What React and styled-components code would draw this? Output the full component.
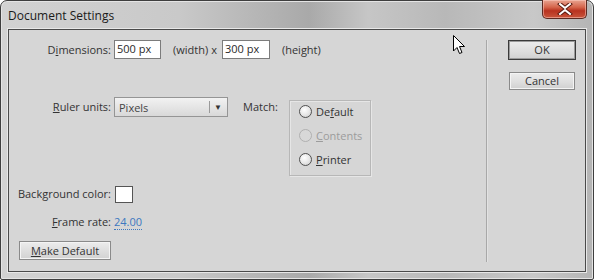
import styled, { createGlobalStyle } from "styled-components"

const GlobalStyle = createGlobalStyle`
    html, body {
        margin: 0;
        padding: 0;
        background: #ffffff;
    }
    body {
        font-family: "Open Sans", "Noto Sans", sans-serif;
    }
`

export default function App() {
    return (
        <>
            <GlobalStyle />
            <Janela>
                <BarraTitulo>
                    <Titulo>Document Settings</Titulo>
                    <BotaoFechar>
                        <svg width="16" height="12" viewBox="0 0 16 12">
                            <path d="M3 1 L8 5 L13 1 M3 11 L8 7 L13 11" stroke="#5a1a10" strokeWidth="4" fill="none" strokeLinecap="square" />
                            <path d="M3 1 L8 5 L13 1 M3 11 L8 7 L13 11" stroke="#ffffff" strokeWidth="2" fill="none" strokeLinecap="square" />
                        </svg>
                    </BotaoFechar>
                </BarraTitulo>
                <Cliente>
                    <Esquerda>
                        <Linha>
                            <Rotulo>D<u>i</u>mensions:</Rotulo>
                            <CampoTexto $largura={47}>500 px</CampoTexto>
                            <Texto $margem={12}>(width)</Texto>
                            <Texto $margem={3}>x</Texto>
                            <CampoTexto $largura={48} $margem={5}>300 px</CampoTexto>
                            <Texto $margem={12}>(height)</Texto>
                        </Linha>
                        <Linha $topo={38} $alinhar="flex-start">
                            <Rotulo $topo={1}><u>R</u>uler units:</Rotulo>
                            <Selecao>
                                <span>Pixels</span>
                                <SetaSelecao>▼</SetaSelecao>
                            </Selecao>
                            <Texto $margem={15} $topo={1} $largura={46}>Match:</Texto>
                            <Grupo>
                                <Opcao>
                                    <Radio />
                                    <span>De<u>f</u>ault</span>
                                </Opcao>
                                <Opcao $desativado>
                                    <Radio $desativado />
                                    <span><u>C</u>ontents</span>
                                </Opcao>
                                <Opcao>
                                    <Radio />
                                    <span><u>P</u>rinter</span>
                                </Opcao>
                            </Grupo>
                        </Linha>
                        <Linha $topo={9}>
                            <Rotulo>Background color:</Rotulo>
                            <Amostra />
                        </Linha>
                        <Linha $topo={10}>
                            <Rotulo><u>F</u>rame rate:</Rotulo>
                            <Valor>24.00</Valor>
                        </Linha>
                        <BotaoPadrao><u>M</u>ake Default</BotaoPadrao>
                    </Esquerda>
                    <Separador />
                    <Direita>
                        <Botao $principal>OK</Botao>
                        <Botao>Cancel</Botao>
                    </Direita>
                    <Cursor>
                        <svg width="13" height="20" viewBox="0 0 13 20">
                            <path d="M0.5 0.5 L0.5 16 L4 12.5 L6.5 18.5 L9 17.5 L6.5 11.5 L11.5 11.5 Z" fill="#ffffff" stroke="#000000" strokeWidth="1" strokeLinejoin="miter" />
                        </svg>
                    </Cursor>
                </Cliente>
            </Janela>
        </>
    )
}

const Janela = styled.div`
    width: 594px;
    height: 280px;
    box-sizing: border-box;
    border: 1px solid #3e3e3e;
    border-radius: 7px 7px 2px 2px;
    background: linear-gradient(90deg, #d2d2d2 0%, #c9c9c9 30%, #a9a9a9 52%, #c6c6c6 62%, #b8b8b8 75%, #c8c8c8 90%, #b4b4b4 100%);
    display: flex;
    flex-direction: column;
    box-shadow: inset 0 0 0 1px #e4e4e4;
`

const BarraTitulo = styled.div`
    height: 28px;
    display: flex;
    align-items: flex-start;
    justify-content: space-between;
    padding: 0 6px 0 7px;
`

const Titulo = styled.div`
    font-size: 12px;
    color: #1a1a1a;
    line-height: 30px;
`

const BotaoFechar = styled.div`
    width: 43px;
    height: 18px;
    margin-top: -1px;
    border: 1px solid #5c2a22;
    border-top: none;
    border-radius: 0 0 5px 5px;
    background: linear-gradient(180deg, #e8a491 0%, #d5654c 40%, #b8321f 60%, #c9553b 100%);
    display: flex;
    align-items: center;
    justify-content: center;
    box-shadow: inset 0 0 0 1px rgba(255, 210, 200, 0.5);
`

const Cliente = styled.div`
    position: relative;
    flex: 1;
    margin: 0 7px 7px 7px;
    border: 1px solid #4a4a4a;
    background: #d6d6d6;
    display: flex;
    box-shadow: 0 0 0 1px #e8e8e8;
`

const Esquerda = styled.div`
    width: 477px;
    padding-top: 10px;
    display: flex;
    flex-direction: column;
`

const Linha = styled.div`
    display: flex;
    align-items: ${p => p.$alinhar || "center"};
    margin-top: ${p => p.$topo || 0}px;
    font-size: 11px;
    color: #333333;
`

const Rotulo = styled.div`
    width: 102px;
    text-align: right;
    margin-right: 3px;
    margin-top: ${p => p.$topo || 0}px;
    line-height: 18px;
    white-space: nowrap;
`

const Texto = styled.span`
    margin-left: ${p => p.$margem || 0}px;
    margin-top: ${p => p.$topo || 0}px;
    width: ${p => (p.$largura ? `${p.$largura}px` : "auto")};
    line-height: 18px;
`

const CampoTexto = styled.div`
    width: ${p => p.$largura}px;
    height: 19px;
    box-sizing: border-box;
    margin-left: ${p => p.$margem || 0}px;
    background: #ffffff;
    border: 1px solid #7c7c7c;
    padding-left: 2px;
    line-height: 15px;
    color: #2a2a2a;
`

const Selecao = styled.div`
    width: 114px;
    height: 20px;
    box-sizing: border-box;
    border: 1px solid #959595;
    background: linear-gradient(180deg, #f2f2f2 0%, #e4e4e4 55%, #d8d8d8 100%);
    display: flex;
    align-items: center;
    justify-content: space-between;
    padding-left: 4px;
    color: #444444;
`

const SetaSelecao = styled.span`
    width: 16px;
    border-left: 1px solid #9a9a9a;
    height: 12px;
    line-height: 12px;
    font-size: 8px;
    text-align: center;
    color: #333333;
    margin-right: 1px;
`

const Grupo = styled.div`
    width: 82px;
    height: 76px;
    box-sizing: border-box;
    margin-top: 3px;
    border: 1px solid #b7b7b7;
    box-shadow: inset 1px 1px 0 #e6e6e6, 1px 1px 0 #e6e6e6;
    padding: 0 0 0 9px;
    display: flex;
    flex-direction: column;
    gap: 4px;
`

const Opcao = styled.div`
    display: flex;
    align-items: center;
    gap: 4px;
    height: 20px;
    color: ${p => (p.$desativado ? "#9c9c9c" : "#333333")};
`

const Radio = styled.div`
    width: 11px;
    height: 11px;
    border-radius: 50%;
    border: 1px solid ${p => (p.$desativado ? "#b0b0b0" : "#505050")};
    background: ${p => (p.$desativado ? "#d8d8d8" : "radial-gradient(circle at 40% 35%, #ffffff 0%, #e8e8e8 50%, #c8c8c8 100%)")};
`

const Amostra = styled.div`
    width: 18px;
    height: 17px;
    box-sizing: border-box;
    border: 1px solid #555555;
    background: #ffffff;
    margin-left: 1px;
`

const Valor = styled.span`
    color: #3d78c0;
    border-bottom: 1px dotted #3d78c0;
    line-height: 14px;
`

const BotaoPadrao = styled.div`
    width: 92px;
    height: 19px;
    box-sizing: border-box;
    margin: 10px 0 0 10px;
    border: 1px solid #8a8a8a;
    background: linear-gradient(180deg, #ececec 0%, #dcdcdc 60%, #d2d2d2 100%);
    box-shadow: inset 0 0 0 1px #f4f4f4;
    font-size: 11px;
    color: #333333;
    text-align: center;
    line-height: 17px;
`

const Separador = styled.div`
    width: 1px;
    background: #a8a8a8;
    margin: 10px 0 9px 0;
    box-shadow: 1px 0 0 #e2e2e2;
`

const Direita = styled.div`
    padding: 10px 0 0 21px;
    display: flex;
    flex-direction: column;
    align-items: center;
    gap: 12px;
`

const Botao = styled.div`
    width: ${p => (p.$principal ? 68 : 66)}px;
    height: ${p => (p.$principal ? 20 : 18)}px;
    box-sizing: border-box;
    border: 1px solid ${p => (p.$principal ? "#3a3a3a" : "#8a8a8a")};
    background: linear-gradient(180deg, #ececec 0%, #dddddd 60%, #d0d0d0 100%);
    box-shadow: inset 0 0 0 1px ${p => (p.$principal ? "#9a9a9a" : "#f4f4f4")};
    font-size: 11px;
    color: #333333;
    text-align: center;
    line-height: ${p => (p.$principal ? 18 : 16)}px;
`

const Cursor = styled.div`
    position: absolute;
    left: 444px;
    top: 5px;
    line-height: 0;
`
